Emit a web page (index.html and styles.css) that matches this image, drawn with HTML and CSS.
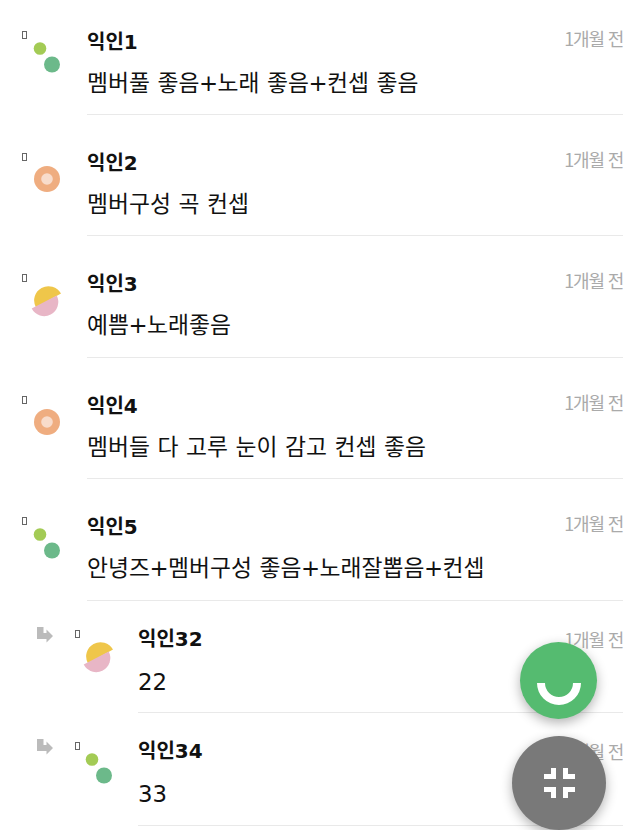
FILE: index.html
```html
<!DOCTYPE html>
<html lang="ko">
<head>
  <meta charset="UTF-8">
  <title>댓글</title>
  <link rel="stylesheet" href="styles.css">
</head>
<body>
  <svg class="defs" width="0" height="0">
    <symbol id="dots" viewBox="0 0 40 40">
      <circle cx="9" cy="6.500" r="6.300" fill="#a3cb55"/>
      <circle cx="21" cy="22.500" r="8" fill="#6cb98a"/>
    </symbol>
    <symbol id="ring" viewBox="0 0 40 40">
      <circle cx="16" cy="15" r="13" fill="#efad80"/>
      <circle cx="16" cy="15" r="5.800" fill="#f8dccb"/>
    </symbol>
    <symbol id="halves" viewBox="0 0 40 40">
      <path d="M5 22.500A13.500 13.500 0 0 1 30 8.500Z" fill="#efc64a"/>
      <path d="M25.700 10.500A13.800 13.800 0 0 1 0.700 23.500Z" fill="#e8b6c6"/>
    </symbol>
  </svg>

  <ul class="comments">
    <li class="comment">
      <div class="side"><span class="tofu"></span><svg class="avatar"><use href="#dots"/></svg></div>
      <div class="body">
        <div class="head"><b class="name">익인1</b><span class="time">1개월 전</span></div>
        <p class="text">멤버풀 좋음<span class="plus">+</span>노래 좋음<span class="plus">+</span>컨셉 좋음</p>
      </div>
    </li>
    <li class="comment">
      <div class="side"><span class="tofu"></span><svg class="avatar"><use href="#ring"/></svg></div>
      <div class="body">
        <div class="head"><b class="name">익인2</b><span class="time">1개월 전</span></div>
        <p class="text">멤버구성 곡 컨셉</p>
      </div>
    </li>
    <li class="comment">
      <div class="side"><span class="tofu"></span><svg class="avatar"><use href="#halves"/></svg></div>
      <div class="body">
        <div class="head"><b class="name">익인3</b><span class="time">1개월 전</span></div>
        <p class="text">예쁨<span class="plus">+</span>노래좋음</p>
      </div>
    </li>
    <li class="comment">
      <div class="side"><span class="tofu"></span><svg class="avatar"><use href="#ring"/></svg></div>
      <div class="body">
        <div class="head"><b class="name">익인4</b><span class="time">1개월 전</span></div>
        <p class="text">멤버들 다 고루 눈이 감고 컨셉 좋음</p>
      </div>
    </li>
    <li class="comment">
      <div class="side"><span class="tofu"></span><svg class="avatar"><use href="#dots"/></svg></div>
      <div class="body">
        <div class="head"><b class="name">익인5</b><span class="time">1개월 전</span></div>
        <p class="text">안녕즈<span class="plus">+</span>멤버구성 좋음<span class="plus">+</span>노래잘뽑음<span class="plus">+</span>컨셉</p>
      </div>
    </li>
    <li class="comment reply">
      <svg class="reply-arrow" viewBox="0 0 16 16"><path d="M0 0H6.500V6H9.500V2.500L16 9L9.500 15.500V12H0Z" fill="#bbb"/></svg>
      <div class="side"><span class="tofu"></span><svg class="avatar"><use href="#halves"/></svg></div>
      <div class="body">
        <div class="head"><b class="name">익인32</b><span class="time">1개월 전</span></div>
        <p class="text">22</p>
      </div>
    </li>
    <li class="comment reply">
      <svg class="reply-arrow" viewBox="0 0 16 16"><path d="M0 0H6.500V6H9.500V2.500L16 9L9.500 15.500V12H0Z" fill="#bbb"/></svg>
      <div class="side"><span class="tofu"></span><svg class="avatar"><use href="#dots"/></svg></div>
      <div class="body">
        <div class="head"><b class="name">익인34</b><span class="time">1개월 전</span></div>
        <p class="text">33</p>
      </div>
    </li>
  </ul>

  <button class="fab fab-smile">
    <svg viewBox="0 0 44 22" width="44" height="22"><path d="M0 0H8A14 14 0 0 0 36 0H44A22 22 0 0 1 0 0Z" fill="#fff"/></svg>
  </button>
  <button class="fab fab-collapse">
    <svg viewBox="0 0 31 30" width="31" height="30"><path d="M7 0H12V11H0V6H7ZM24 0H19V11H31V6H24ZM7 30H12V19H0V24H7ZM24 30H19V19H31V24H24Z" fill="#fff"/></svg>
  </button>
</body>
</html>
```

FILE: styles.css
```css
html, body {
  height: 830px;
  overflow: hidden;
}
body {
  margin: 0;
  background: #fff;
  font-family: "DejaVu Sans", "Noto Sans CJK KR", sans-serif;
  color: #111;
}
.defs {
  display: block;
  height: 0;
}
.comments {
  list-style: none;
  margin: 0;
  padding: 0 17px 0 0;
}
.comment {
  display: flex;
  height: 121.500px;
  box-sizing: border-box;
}
.comment:first-child {
  height: 114.500px;
}
.comment:first-child .body {
  padding-top: 27px;
}
.comment:first-child .side {
  padding-top: 31px;
}
.side {
  width: 65px;
  margin-left: 22px;
  padding-top: 38px;
  flex: none;
}
.tofu {
  display: block;
  width: 3px;
  height: 6px;
  border: 1px solid #666;
}
.avatar {
  display: block;
  width: 40px;
  height: 40px;
  margin: 3px 0 0 9px;
}
.body {
  flex: 1;
  padding-top: 33px;
  border-bottom: 1px solid #e9e9e9;
  min-width: 0;
}
.head {
  display: flex;
  justify-content: space-between;
  align-items: flex-start;
  height: 30px;
}
.name {
  font-size: 20px;
  line-height: 30px;
  font-weight: bold;
  color: #111;
}
.time {
  font-size: 18px;
  line-height: 24px;
  color: #aaa;
  font-family: "Noto Sans CJK KR", sans-serif;
  margin-top: -1px;
  letter-spacing: -1.2px;
}
.text {
  margin: 10px 0 0;
  font-size: 22.800px;
  line-height: 32px;
  word-spacing: 0.300px;
}
.plus {
  margin: 0 -0.500px;
}
.reply {
  height: 112.500px;
  padding-left: 37px;
}
.reply .side {
  width: 63px;
  margin-left: 22px;
  padding-top: 29px;
}
.reply .avatar {
  margin-left: 8px;
}
.reply .body {
  padding-top: 23px;
}
.reply .time {
  margin-top: 3px;
}
.reply .text {
  margin-top: 12px;
}
.reply-arrow {
  width: 16px;
  height: 16px;
  margin-top: 26px;
  flex: none;
}
.fab {
  position: fixed;
  border: 0;
  padding: 0;
  border-radius: 50%;
  display: flex;
  align-items: center;
  justify-content: center;
}
.fab-smile {
  left: 520px;
  top: 642px;
  width: 77px;
  height: 77px;
  background: #55bb70;
  box-shadow: 0 4px 12px rgba(0, 0, 0, 0.3);
}
.fab-smile svg {
  margin-top: 27px;
}
.fab-collapse {
  left: 512px;
  top: 736px;
  width: 94px;
  height: 94px;
  background: #797979;
  box-shadow: 0 4px 12px rgba(0, 0, 0, 0.3);
}
```
